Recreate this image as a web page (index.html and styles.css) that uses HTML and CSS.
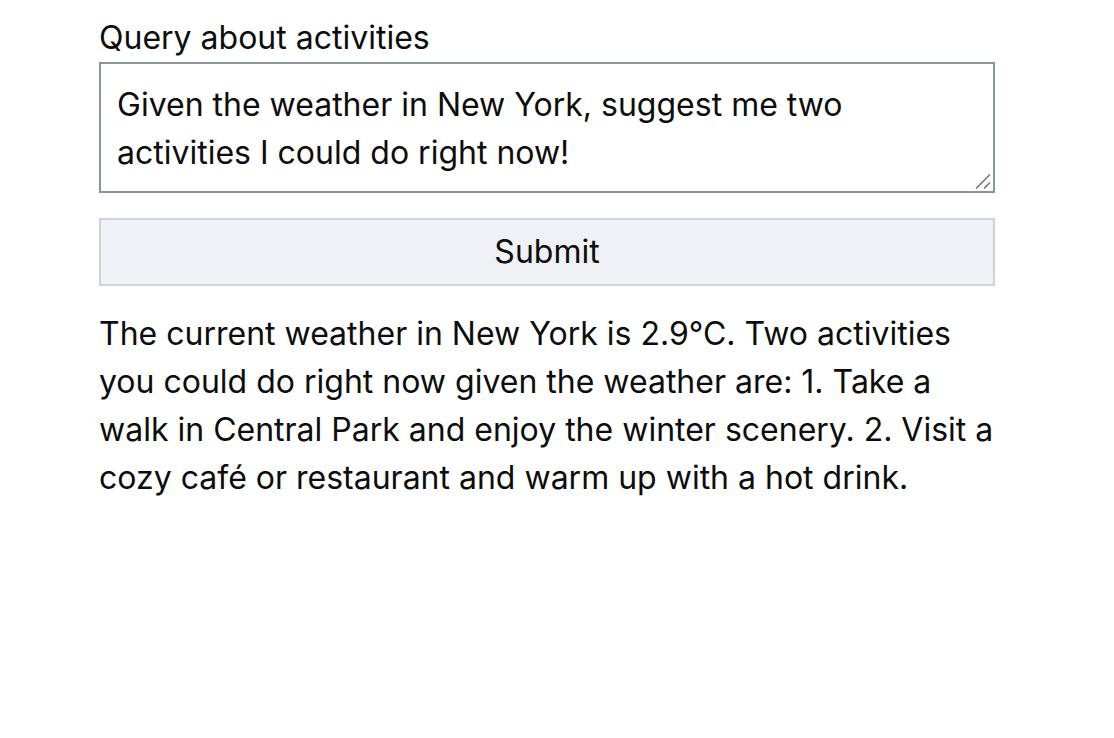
FILE: index.html
```html
<!DOCTYPE html>
<html lang="en">
<head>
<meta charset="utf-8">
<title>Query about activities</title>
<link rel="stylesheet" href="styles.css">
</head>
<body>
<main class="app">
  <form class="query-form">
    <label class="label" for="q">Query about activities</label>
    <div class="field">
      <textarea id="q" class="query" rows="2">Given the weather in New York, suggest me two activities I could do right now!</textarea>
      <svg class="grip" width="18" height="18" viewBox="0 0 18 18" aria-hidden="true">
        <line x1="2" y1="16.5" x2="16" y2="2.5" stroke="#6f6f6f" stroke-width="1.4"/>
        <line x1="10" y1="16.5" x2="16" y2="10.5" stroke="#6f6f6f" stroke-width="1.4"/>
      </svg>
    </div>
    <button type="button" class="submit">Submit</button>
  </form>
  <p class="answer">The current weather in New York is 2.9°C. Two activities you could do right now given the weather are: 1. Take a walk in Central Park and enjoy the winter scenery. 2. Visit a cozy café or restaurant and warm up with a hot drink.</p>
</main>
</body>
</html>
```

FILE: styles.css
```css
html, body {
  margin: 0;
  padding: 0;
  background: #ffffff;
}
body {
  font-family: Inter, "Noto Sans", sans-serif;
  font-size: 32px;
  line-height: 48px;
  color: #0d0d0d;
}
.app {
  width: 896px;
  padding: 14px 0 0 99px;
}
.query-form {
  display: flex;
  flex-direction: column;
}
.label {
  display: block;
  height: 48px;
}
.field {
  position: relative;
  margin-top: 0;
}
.query {
  display: block;
  box-sizing: border-box;
  width: 896px;
  height: 131px;
  margin: 0;
  padding: 17px 16px 15px;
  border: 2px solid #8a94a3;
  border-radius: 0;
  font: inherit;
  line-height: 48px;
  color: #0d0d0d;
  resize: none;
  outline: none;
}
.grip {
  position: absolute;
  right: 3px;
  bottom: 3px;
}
.submit {
  box-sizing: border-box;
  width: 896px;
  height: 68px;
  margin-top: 25px;
  padding: 8px 0;
  border: 2px solid #ced2d9;
  border-radius: 0;
  background: #f0f1f5;
  font: inherit;
  line-height: 48px;
  color: #0d0d0d;
  cursor: pointer;
}
.answer {
  margin: 24px 0 0;
  width: 896px;
}
```
